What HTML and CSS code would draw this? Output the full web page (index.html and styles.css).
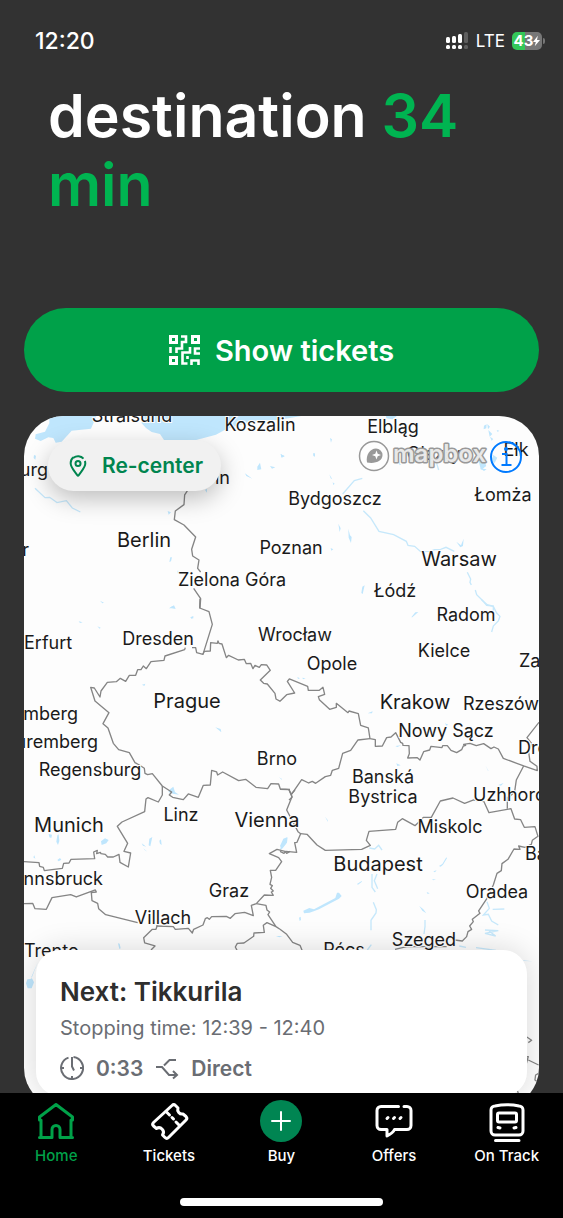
FILE: index.html
```html
<!DOCTYPE html>
<html lang="en">
<head>
    <meta charset="UTF-8">
    <meta name="viewport" content="width=device-width, initial-scale=1.0">
    <title>Home</title>
    <link rel="stylesheet" href="styles.css">
</head>
<body>
    <header class="statusBar">
        <span class="time">12:20</span>
        <div class="statusIcons">
            <svg class="signal" viewBox="0 0 23 18" aria-hidden="true">
                <g fill="#fff">
                    <rect x="0" y="5" width="4" height="6" rx="1.5"/>
                    <rect x="6" y="4" width="4" height="7" rx="1.5"/>
                    <rect x="12" y="2" width="4" height="9" rx="1.5"/>
                    <rect x="0" y="13" width="4" height="4" rx="1.5"/>
                    <rect x="6" y="13" width="4" height="4" rx="1.5"/>
                    <rect x="12" y="13" width="4" height="4" rx="1.5"/>
                </g>
                <g fill="#5f5f5f">
                    <rect x="18" y="0" width="4" height="11" rx="1.5"/>
                    <rect x="18" y="13" width="4" height="4" rx="1.5"/>
                </g>
            </svg>
            <span class="network">LTE</span>
            <div class="battery">
                <span>43</span>
                <svg viewBox="0 0 8 12" aria-hidden="true"><path d="M5.5 0 0 7h3.2L2 12l6-7.2H4.6z" fill="#fff"/></svg>
            </div>
        </div>
    </header>

    <main class="content">
        <h1>destination <span>34 min</span></h1>

        <button type="button" class="btnTickets">
            <svg viewBox="0 0 31 30" aria-hidden="true">
                <g fill="none" stroke="#fff" stroke-width="3">
                    <path d="M1.5 1.5h6v6h-6zM23.5 1.5h6v6h-6zM1.5 22.5h6v6h-6z"/>
                    <path stroke-width="2.600" d="M12 1.500h5v5.500h-4v6.500h-5.500v4.500M1.500 12v6M21 12v5.500h-7.500v11h5M31 13.500h-5v5H31M18.500 21v3M22.500 30v-4.500h7V30"/>
                </g>
            </svg>
            Show tickets
        </button>

        <section class="map">
            <svg class="mapCanvas" viewBox="0 0 515 692" preserveAspectRatio="xMidYMin slice" role="img" aria-label="Map">
                <!-- lakes and rivers, one group per tile -->
                <g class="water">
                    <g transform="translate(-4 -6) scale(.3333)">
                        <path d="M88 17H230L213 56 155 62 125 95 107 98 100 84 85 82 62 93 45 86 47 73 75 65 88 40zM365 17H850L775 30 700 32 618 58 588 74 520 92 432 90 420 72 395 66 378 54 365 40z"/>
                        <path d="M42 135l6 2-2 12-5-5zM675 190l22 16-18-8zM712 170l8-12 4 20-12 2zM750 168l16 4-10 4zM782 132l12 7-9 4zM555 240l6-4v12zM443 303l10 4-7 7zM451 442l5 0-3 12-5 2zM472 482l6 1-4 9zM240 572l12 6-5 2zM449 593l13-7 5 10-8-3z"/>
                        <path class="river" d="M45 235l30 28 14-1 22 16 28-6 18 22 24 12"/>
                    </g>
                    <g transform="translate(256 -6) scale(.3333)">
                        <path d="M318 17h34l-15 11-18-3zM612 47l8-4-1 12-8 3zM622 42l8 8-6 8zM625 60l12 12-8 8zM630 80l10 7-5 5zM595 150l16-4 8 22-16 12zM640 135l12 8-8 16-10-6zM600 175l20 3-8 5zM650 60l8 2-5 4zM150 84l6 4-3 10zM99 130h6v10l-5-2zM2 133l12 5-10 4zM148 193l9 15-5-3zM158 217l6 4-4 4zM175 341l7 14-3 11zM205 356l5 20 5 5-2 18-7-16zM152 414l8 4-6 4zM247 530l7-4-6 26-4-3zM529 395l14 11 8-20-2 22-8 4z"/>
                        <path class="river" d="M188 252l35-40 24-7M250 302l22 22 25 40 44 10 38 20 5 12 20 3 18 16 28-1 14-5 18-1 16-6 25 12M562 487l10 20-2 10 4 8M586 540l4 14 20 20 10 12 20 2v16M355 155l6 10M470 160l6 20"/>
                    </g>
                    <g transform="translate(-4 184) scale(.3333)">
                        <path d="M176 64l12 3-8 2zM232 79l10 4-3 3zM511 52l9-4v7l-6 1zM447 25l10-6 10 8-12-2zM366 254l10-3-3 7zM586 382l16 5 2 10-8-7zM450 568l10-8 5 16 12 8-18-3-14-5zM777 532l8 4 1 4z"/>
                    </g>
                    <g transform="translate(256 184) scale(.3333)">
                        <path d="M394 52l12-15 9-1-18 16zM52 231l8 4-6 2zM67 233l10 2-8 3zM263 340l15-6-2 6zM346 438l18-2-12 5zM349 490l13 6-10 2zM616 496l10 18-2-2zM655 555l16-6-8 8zM495 370l10 4-6 3zM0 540l4 0z"/>
                        <path class="river" d="M605 0l17 14 18 5 10 20 10 10-5 14-15 15-5 18"/>
                    </g>
                    <g transform="translate(-4 374) scale(.3333)">
                        <path d="M86 132l10 2-2 10-6-2zM112 136l4-3 2 20-4 12-5-10zM243 154l12-9 11 5-7 10-14 5zM386 166l2-20 9-5-6 28zM365 160l14 10-10-3zM370 175l12 10-8-5zM418 152l5-4 2 17-5-4zM781 175l12-28 10-5-2 16-13 17-7 5zM112 210l8-6 4 5-8 5zM40 202l3-6 3 10zM294 460l5 1 3 14-4 2zM768 438h20l-10 4z"/>
                    </g>
                    <g transform="translate(256 374) scale(.3333)">
                        <path d="M0 168l10-22 11-4-3 18-13 16zM70 362l18-8 14 4 64-34 5-16 6 0 8 10-8 8-60 32-28 10-17 2zM231 282l14-9 1 2-12 9zM477 228l10-6 12-20 2 3-12 19-7 6zM135 80l8 10 1 6zM418 348l12 10 9 12-12-8zM57 383l5-3 1 10-4 3zM456 268h12l-8 3zM460 244l10-3-5 6zM425 326l5 3zM440 306l9 4-6 2z"/>
                        <path class="river" d="M268 174l16 3 12-11 10 14M276 252v40l10 14M291 252l-8 20 10 24M280 337l9 22-1 10-15 22v30M435 390v20l-3 22M621 335l7 20-18 20 15-2 10 20 20 12M638 358l35-1M615 420l40 2-40 8 32 8-20-15M538 468l20 4M588 473l60 8M262 480l12-16"/>
                    </g>
                    <g transform="translate(-4 524) scale(.3333)">
                        <path d="M54 65l-20 46 8 16-7 18-12 0-5-15 4-12 12-2zM1508 61l30 3-26-1z"/>
                    </g>
                </g>

                <!-- country borders -->
                <g class="border">
                    <g transform="translate(-4 -6) scale(.3333)">
                        <path d="M502 243 494 255 492 284 466 303 463 329 492 345 527 381 515 418 518 438 537 450 533 475 542 486M521 535 542 566 540 595"/>
                    </g>
                    <g transform="translate(-4 184) scale(.3333)">
                        <path d="M540 -4 539 24 567 35 577 73 549 163 530 158 527 143 516 143M496 143 494 149 435 168 432 181 393 185 379 206 370 198 363 209 353 209 347 226 328 226 317 244 301 235 289 245 262 247 243 273 240 291 223 264 212 262 225 303 267 338 249 371 264 384 280 430 296 449 328 458 345 488 358 495 373 505 375 520 383 524 397 521 427 558 455 576 448 585 458 592 490 599 505 582 535 592 550 556 571 555 575 511 590 516 593 525 608 516 656 542 677 538 708 562 743 566 753 551 776 552 781 567 810 568"/>
                        <path d="M549 163 553 154 571 153 572 128 592 130 594 123 597 130 606 132 619 173 626 166 655 180 673 178 679 191 692 190 699 206 705 196 718 202 724 194 740 195 751 211 721 240 731 250 742 252 765 280 768 297 781 304"/>
                    </g>
                    <g transform="translate(256 184) scale(.3333)">
                        <path d="M0 304 20 284 44 279 22 244 28 237 83 259 85 271 118 271 129 262 134 283 115 290 118 299 149 328 169 322 169 310 204 338 207 333 235 341 242 376 265 384 270 416 286 419 286 439 307 438 320 413 333 411 347 398 362 427 368 430 369 436 387 437 388 461 383 474 412 473 420 480 431 455 449 450 453 439 486 443 488 437 502 437 513 451 530 458 545 449 550 438 557 436 551 433 570 430 589 437 611 431 633 446 642 441 655 447 670 475 731 498 772 512 771 499 750 484 746 456 755 430 741 413 777 367"/>
                        <path d="M270 416 234 420 212 451 188 460 176 505 157 511 152 526 136 530 107 550 97 544 86 549 65 539 34 584 27 569 0 568M731 498 709 540 704 575 688 590M34 584 36 592 27 600"/>
                    </g>
                    <g transform="translate(-4 374) scale(.3333)">
                        <path d="M427 -12 427 15 415 36 384 23 378 27 374 65 306 96 292 109 323 160 312 184 332 189 325 231 300 217 297 193 280 201 263 201 256 193 243 191 241 187 230 191 232 181 221 186 224 206 153 208 147 219 131 220 127 235 102 238 73 242 70 232 59 229 57 218 12 215"/>
                        <path d="M12 341 38 340 45 356 79 358 96 323 152 314 169 321 226 300 229 306 214 308 216 332 233 340 236 356 257 374 353 398M409 408 460 410 466 418 505 415 517 429 521 418 549 405 556 386 562 383 568 388 575 380 619 379 631 385 645 371 674 367 700 377 694 346 709 341 733 315 760 316 754 306 760 303 752 295 757 287 750 283 755 262 751 241 767 241 785 215 776 203 748 191 771 178 795 184 800 190 810 184"/>
                        <path d="M412 406 408 418 397 418 371 443 374 459 405 468 393 480M709 341 738 346 741 360 749 366 744 374 768 410 741 398 730 406 733 427 702 429 701 439 672 459 652 460 646 471 656 490M768 410 780 418"/>
                    </g>
                    <g transform="translate(256 374) scale(.3333)">
                        <path d="M45 0 34 12M27 0 36 20 20 60 54 125 62 131 81 133 111 165 136 181 245 178 271 166 259 151 267 124 347 118 353 97 367 86 405 107 416 97 430 82 454 82 481 33 519 24 554 40 581 30 612 35 627 68 693 56 704 87 722 89 733 112 765 110 774 139 757 151 754 163 735 172 716 168 720 178 702 177 684 208 666 221 664 242 651 250 640 285 620 327 596 363 600 370 577 388 580 395 569 408 575 418 564 425 560 440 547 453 524 450"/>
                        <path d="M682 56V20M62 131 51 157 44 158 50 187 18 184 12 190 0 184M0 418 20 433 38 457 60 466 68 485M345 478 380 470 500 470"/>
                    </g>
                    <g transform="translate(-4 524) scale(.3333)">
                        <path d="M1516 288 1535 301 1525 308M1518 375 1525 350 1518 350M1525 360 1556 375M1556 400 1547 405 1545 420 1556 428M1490 445 1500 475"/>
                    </g>
                </g>

                <g class="city">
                    <text x="108" y="6">Stralsund</text>
                    <text x="236" y="15">Koszalin</text>
                    <text x="369" y="17">Elbląg</text>
                    <text x="415" y="44">Olsztyn</text>
                    <text x="492" y="40">Ełk</text>
                    <text x="24" y="60" class="endText">Hamburg</text>
                    <text x="206" y="68" class="endText">Szczecin</text>
                    <text x="311" y="89">Bydgoszcz</text>
                    <text x="479" y="85">Łomża</text>
                    <text x="5" y="140" class="endText">Hanover</text>
                    <text x="267" y="138">Poznan</text>
                    <text x="208" y="170">Zielona Góra</text>
                    <text x="371" y="181">Łódź</text>
                    <text x="442" y="205">Radom</text>
                    <text x="0" y="233" class="startText">Erfurt</text>
                    <text x="134" y="229">Dresden</text>
                    <text x="271" y="225">Wrocław</text>
                    <text x="420" y="241">Kielce</text>
                    <text x="308" y="254">Opole</text>
                    <text x="495" y="251" class="startText">Zamość</text>
                    <text x="54" y="304" class="endText">Bamberg</text>
                    <text x="74" y="332" class="endText">Nuremberg</text>
                    <text x="477" y="294">Rzeszów</text>
                    <text x="422" y="321">Nowy Sącz</text>
                    <text x="494" y="338" class="startText">Drohobych</text>
                    <text x="66" y="360">Regensburg</text>
                    <text x="253" y="349">Brno</text>
                    <text x="359" y="367">Banská</text>
                    <text x="359" y="387">Bystrica</text>
                    <text x="449" y="385" class="startText">Uzhhorod</text>
                    <text x="157" y="405">Linz</text>
                    <text x="426" y="417">Miskolc</text>
                    <text x="501" y="444" class="startText">Baia Mare</text>
                    <text x="79" y="469" class="endText">Innsbruck</text>
                    <text x="205" y="481">Graz</text>
                    <text x="473" y="482">Oradea</text>
                    <text x="139" y="508">Villach</text>
                    <text x="400" y="530">Szeged</text>
                    <text x="320" y="540">Pécs</text>
                    <text x="0" y="541" class="startText">Trento</text>
                </g>
                <g class="city capital">
                    <text x="120" y="131">Berlin</text>
                    <text x="435" y="150">Warsaw</text>
                    <text x="163" y="292">Prague</text>
                    <text x="391" y="293">Krakow</text>
                    <text x="45" y="416">Munich</text>
                    <text x="243" y="411">Vienna</text>
                    <text x="354" y="455">Budapest</text>
                </g>
            </svg>

            <div class="mapTop">
                <button type="button" class="btnRecenter">
                    <svg viewBox="0 0 18 22" aria-hidden="true">
                        <path d="M4.500 2.300A7.200 7.200 0 0 0 1.700 8.500C1.700 12.500 6 16.500 8.300 20.300q.7 1 1.400 0C12 16.500 16.300 12.500 16.300 8.500q0-1.500-.5-2.500M4.500 2.800A7.300 7.300 0 0 1 14.500 3.700"/>
                        <circle cx="9" cy="8.500" r="2.500"/>
                    </svg>
                    Re-center
                </button>
                <div class="attribution">
                    <svg class="mapboxLogo" viewBox="0 0 131 34" role="img" aria-label="mapbox">
                        <circle cx="16" cy="16" r="14.500" fill="#fff" fill-opacity=".6" stroke="#999" stroke-width="1.500"/>
                        <path d="M9 22.500C7.500 15 12 8.500 18 8.500a6.500 6.500 0 0 1 6.500 6.500c0 6-7 9-15.500 7.500z" fill="#999"/>
                        <path d="M18.500 10.500l1.200 3.300 3.300 1.200-3.300 1.200-1.200 3.300-1.200-3.300-3.300-1.200 3.300-1.200z" fill="#fff"/>
                        <text x="35" y="22">mapbox</text>
                    </svg>
                    <button type="button" class="btnInfo" aria-label="Info">
                        <svg viewBox="0 0 34 34" aria-hidden="true">
                            <circle cx="17" cy="17" r="15"/>
                            <path d="M13 14h4.500v11M12.500 25h10"/>
                            <circle class="dot" cx="17" cy="9" r="2"/>
                        </svg>
                    </button>
                </div>
            </div>

            <article class="nextStop">
                <h2>Next: Tikkurila</h2>
                <p>Stopping time: 12:39 - 12:40</p>
                <div class="tripRow">
                    <svg class="clock" viewBox="0 0 24 24" aria-hidden="true">
                        <path d="M13.500 1.100A11 11 0 1 1 8.500 1.600M12 1v9.500l2 4M1 12h3M20 12h3M12 20v3"/>
                    </svg>
                    <span>0:33</span>
                    <svg class="route" viewBox="0 0 24 20" aria-hidden="true">
                        <path d="M1 9h6l7 8h7M18 13l4 4-4 3.500M9 7.500 14.500 2H21"/>
                    </svg>
                    <span>Direct</span>
                </div>
            </article>
        </section>
    </main>

    <nav class="tabBar">
        <a href="#" class="tab active">
            <svg viewBox="0 0 42 42" aria-hidden="true">
                <path d="M6 37.500V20H4.500V17L21 4.500 37.500 17v3H36v17.500M4.500 37.500H17V29.500a4 4 0 0 1 8 0v8H37.500"/>
            </svg>
            Home
        </a>
        <a href="#" class="tab">
            <svg viewBox="0 0 42 42" aria-hidden="true">
                <path d="M24 5.500a2.500 2.500 0 0 1 3.500 0l2.500 2.500a4.500 4.500 0 0 0 5 6l3 2.500a2.500 2.500 0 0 1 0 3.500L20.500 37.500a2.500 2.500 0 0 1-3.500 0l-2.500-2.500a4.500 4.500 0 0 0-6-6.500l-3-2.500a2.500 2.500 0 0 1 0-3.500z"/>
                <path d="M18.500 12l3 3M24 17.500l1.500 1.500M28 22l3 3"/>
            </svg>
            Tickets
        </a>
        <a href="#" class="tab">
            <svg viewBox="0 0 42 42" aria-hidden="true">
                <circle cx="21" cy="21" r="21" fill="#008552" stroke="none"/>
                <path d="M21 12v18M12 21h18" stroke-width="2"/>
            </svg>
            Buy
        </a>
        <a href="#" class="tab">
            <svg viewBox="0 0 42 42" aria-hidden="true">
                <path d="M25.500 6.500H8a4 4 0 0 0-4 4v15a4 4 0 0 0 4 4h6v6.500q6-3 7.500-6.500H34a4 4 0 0 0 4-4v-15a4 4 0 0 0-4-4h-3"/>
                <path d="M14 18.500l1-1M20.500 18.500l1-1M27 18.500l1-1"/>
            </svg>
            Offers
        </a>
        <a href="#" class="tab">
            <svg viewBox="0 0 42 42" aria-hidden="true">
                <path d="M5 10a4 4 0 0 1 4-4q12-2.500 24 0a4 4 0 0 1 4 4v21a4 4 0 0 1-4 4H9a4 4 0 0 1-4-4z"/>
                <rect x="11.500" y="13" width="19" height="9" rx="1.500"/>
                <path d="M12 27.500l2 .5M30 27.500l-2 .5M9.500 40.500H33"/>
            </svg>
            On Track
        </a>
    </nav>
    <div class="homeIndicator"></div>
</body>
</html>
```
FILE: styles.css
```css
* {
    box-sizing: border-box;
}
body {
    font-family: Inter, "Liberation Sans", sans-serif;
    margin: 0;
    height: 100vh;
    display: flex;
    flex-direction: column;
    background-color: #323232;
    color: #fff;
    overflow: hidden;
}
button {
    font-family: inherit;
    border: none;
    padding: 0;
    cursor: pointer;
}

/* status bar */
.statusBar {
    flex: none;
    height: 81px;
    padding: 0 21px 0 35px;
    display: flex;
    justify-content: space-between;
    align-items: center;
}
.time {
    font-size: 23px;
    font-weight: 500;
}
.statusIcons {
    display: flex;
    align-items: center;
    gap: 7px;
}
.signal {
    width: 23px;
    height: 18px;
}
.network {
    font-size: 17px;
}
.battery {
    position: relative;
    width: 30px;
    height: 18px;
    border-radius: 5px;
    background: linear-gradient(to right, #34c759 43%, #777 43%);
    display: flex;
    justify-content: center;
    align-items: center;
    font-size: 15px;
    font-weight: 700;
}
.battery svg {
    width: 7px;
    height: 12px;
}
.battery::after {
    content: "";
    position: absolute;
    right: -3px;
    top: 6px;
    width: 2px;
    height: 6px;
    border-radius: 0 2px 2px 0;
    background-color: #777;
}

.content {
    flex: 1;
    min-height: 0;
    padding: 0 24px;
    overflow: hidden;
    display: flex;
    flex-direction: column;
}
h1 {
    margin: 0 24px 89px;
    font-size: 59px;
    line-height: 69px;
    font-weight: 600;
}
h1 span {
    color: #00b451;
}
.btnTickets {
    flex: none;
    height: 84px;
    margin-bottom: 24px;
    border-radius: 42px;
    background-color: #00a149;
    color: #fff;
    font-size: 29px;
    font-weight: 600;
    display: flex;
    justify-content: center;
    align-items: center;
    gap: 15px;
}
.btnTickets svg {
    width: 31px;
    height: 30px;
}

/* map */
.map {
    flex: none;
    position: relative;
    height: 692px;
    border-radius: 40px;
    background-color: #fdfdfd;
    overflow: hidden;
}
.mapCanvas {
    display: block;
    width: 100%;
    height: 100%;
}
.water {
    fill: #bfe6fd;
}
.river {
    fill: none;
    stroke: #c6e8fb;
    stroke-width: 4;
}
.border {
    fill: none;
    stroke: #858585;
    stroke-width: 4;
    stroke-linejoin: round;
}
.city {
    font-size: 18px;
    fill: #1a1a1a;
    stroke: #fdfdfd;
    stroke-width: 2px;
    paint-order: stroke;
    text-anchor: middle;
}
.capital {
    font-size: 20px;
}
.startText {
    text-anchor: start;
}
.endText {
    text-anchor: end;
}
.mapTop {
    position: absolute;
    top: 24px;
    left: 24px;
    right: 16px;
    display: flex;
    justify-content: space-between;
    align-items: flex-start;
}
.btnRecenter {
    height: 51px;
    padding: 0 18px 0 21px;
    border-radius: 26px;
    background-color: #f1f1f1;
    color: #00854f;
    font-size: 21px;
    font-weight: 600;
    display: flex;
    align-items: center;
    gap: 15px;
    box-shadow: 0 8px 24px rgba(0, 0, 0, 0.25);
}
.btnRecenter svg {
    width: 18px;
    height: 22px;
    fill: none;
    stroke: #00854f;
    stroke-width: 2;
}
.attribution {
    display: flex;
    align-items: center;
}
.mapboxLogo {
    width: 131px;
    height: 34px;
}
.mapboxLogo text {
    font-size: 24px;
    font-weight: 600;
    fill: #fff;
    fill-opacity: 0.8;
    stroke: #999;
    stroke-width: 3;
    stroke-linejoin: round;
    paint-order: stroke;
}
.btnInfo {
    width: 34px;
    height: 34px;
    background: none;
}
.btnInfo svg {
    display: block;
    fill: none;
    stroke: #007aff;
    stroke-width: 2;
}
.btnInfo .dot {
    fill: #007aff;
    stroke: none;
}

/* next stop card */
.nextStop {
    position: absolute;
    left: 12px;
    right: 12px;
    bottom: 12px;
    padding: 24px 24px 12px;
    border-radius: 24px;
    background-color: #fff;
    box-shadow: 0 0 30px rgba(0, 0, 0, 0.15);
    color: #6a6d73;
}
h2 {
    margin: 0;
    font-size: 26px;
    line-height: 36px;
    font-weight: 600;
    color: #2e2e2e;
}
.nextStop p {
    margin: 0 0 6px;
    font-size: 20px;
    line-height: 36px;
}
.tripRow {
    display: flex;
    align-items: center;
    height: 32px;
    gap: 12px;
    font-size: 21px;
    font-weight: 600;
}
.tripRow svg {
    width: 24px;
    height: 24px;
    fill: none;
    stroke: #6a6d73;
    stroke-width: 2;
}

/* bottom tabs */
.tabBar {
    flex: none;
    display: flex;
    height: 105px;
    padding-top: 7px;
    background-color: #000;
}
.tab {
    flex: 1;
    display: flex;
    flex-direction: column;
    align-items: center;
    gap: 4px;
    color: #fff;
    font-size: 15px;
    line-height: 20px;
    font-weight: 500;
    text-decoration: none;
}
.tab svg {
    width: 42px;
    height: 42px;
    fill: none;
    stroke: currentColor;
    stroke-width: 3;
    stroke-linecap: round;
    stroke-linejoin: round;
}
.active {
    color: #00a149;
}
.homeIndicator {
    flex: none;
    height: 20px;
    background-color: #000;
}
.homeIndicator::before {
    content: "";
    display: block;
    width: 36%;
    height: 8px;
    margin: 0 auto;
    border-radius: 4px;
    background-color: #fff;
}
```
